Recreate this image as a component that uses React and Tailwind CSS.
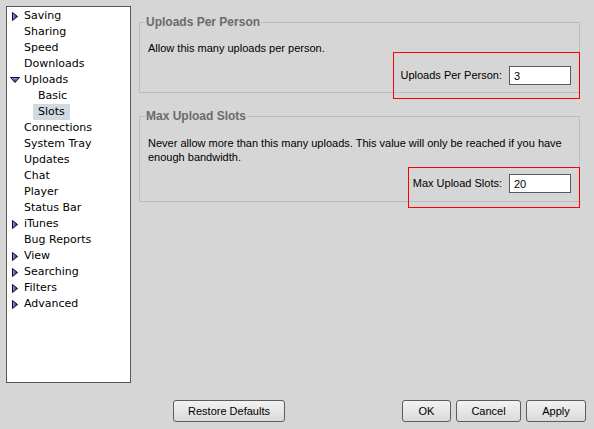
import React from 'react';

const treeItems = [
  { label: 'Saving', arrow: 'right' },
  { label: 'Sharing' },
  { label: 'Speed' },
  { label: 'Downloads' },
  { label: 'Uploads', arrow: 'down' },
  { label: 'Basic', sub: true },
  { label: 'Slots', sub: true, selected: true },
  { label: 'Connections' },
  { label: 'System Tray' },
  { label: 'Updates' },
  { label: 'Chat' },
  { label: 'Player' },
  { label: 'Status Bar' },
  { label: 'iTunes', arrow: 'right' },
  { label: 'Bug Reports' },
  { label: 'View', arrow: 'right' },
  { label: 'Searching', arrow: 'right' },
  { label: 'Filters', arrow: 'right' },
  { label: 'Advanced', arrow: 'right' },
];

const Arrow = ({ dir }) =>
  dir === 'down' ? (
    <svg width="10" height="6" viewBox="0 0 10 6" className="ml-[3px]">
      <defs>
        <linearGradient id="gd" x1="0" y1="0" x2="0" y2="1">
          <stop offset="0" stopColor="#9a9aff" />
          <stop offset="1" stopColor="#1c1c8a" />
        </linearGradient>
      </defs>
      <polygon points="0.5,0.5 9.5,0.5 5,5.5" fill="url(#gd)" stroke="#0c0c14" strokeWidth="1" />
    </svg>
  ) : (
    <svg width="6" height="9" viewBox="0 0 6 9" className="ml-[5px]">
      <defs>
        <linearGradient id="gr" x1="0" y1="0" x2="1" y2="0">
          <stop offset="0" stopColor="#9a9aff" />
          <stop offset="1" stopColor="#1c1c8a" />
        </linearGradient>
      </defs>
      <polygon points="0.5,0.5 5.5,4.5 0.5,8.5" fill="url(#gr)" stroke="#0c0c14" strokeWidth="1" />
    </svg>
  );

const TreeRow = ({ item }) => {
  if (item.sub) {
    return (
      <div className="h-[16px] flex items-center pl-[26px]">
        <span className={`h-[16px] flex items-center px-[5px] ${item.selected ? 'bg-[#d3d9e1]' : ''}`}>
          {item.label}
        </span>
      </div>
    );
  }
  return (
    <div className="h-[16px] flex items-center">
      <div className="w-[17px] flex items-center">{item.arrow && <Arrow dir={item.arrow} />}</div>
      <span>{item.label}</span>
    </div>
  );
};

const Group = ({ title, children, className = '' }) => (
  <fieldset className={`border border-[#bcbcbc] px-[8px] ${className}`}>
    <legend className="-ml-[3px] px-[1px] text-[12px] leading-[14px] font-bold text-[#6b6b6b]">{title}</legend>
    {children}
  </fieldset>
);

const Field = ({ label, value, box }) => (
  <div className="relative flex items-center justify-end gap-[7px]">
    <span>{label}</span>
    <input
      readOnly
      value={value}
      className="w-[62px] h-[19px] bg-white border border-[#555c5c] px-[4px] text-[11px] text-black outline-none"
    />
    <div className={`absolute border border-solid border-[#ff0000] pointer-events-none ${box}`} />
  </div>
);

const Button = ({ children, w }) => (
  <button className={`h-[22px] ${w} rounded-[3px] border border-[#5c5c5c] bg-gradient-to-b from-[#f2f2f2] to-[#dadada] text-[11px] text-black`}>
    {children}
  </button>
);

export default function App() {
  return (
    <div className="w-[594px] h-[429px] bg-[#d6d6d6] flex flex-col font-['Liberation_Sans',Arial,sans-serif] text-[11px] text-black overflow-hidden">
      <div className="flex px-[6px] pt-[6px]">
        {/* Tree */}
        <div className="w-[125px] h-[377px] pt-[1px] bg-white border border-[#535959] font-['DejaVu_Sans',sans-serif] text-[11px] text-black">
          {treeItems.map((it) => (
            <TreeRow key={it.label} item={it} />
          ))}
        </div>

        {/* Options */}
        <div className="ml-[8px] w-[441px] pt-[9px]">
          <Group title="Uploads Per Person">
            <div className="pt-[12px] leading-[14px]">Allow this many uploads per person.</div>
            <div className="mt-[11px] mb-[7px]">
              <Field label="Uploads Per Person:" value="3" box="top-[-14px] bottom-[-14px] right-[-9px] w-[187px]" />
            </div>
          </Group>

          <Group title="Max Upload Slots" className="mt-[16px]">
            <div className="pt-[13px] leading-[14px]">
              Never allow more than this many uploads. This value will only be reached if you have enough bandwidth.
            </div>
            <div className="mt-[10px] mb-[8px]">
              <Field label="Max Upload Slots:" value="20" box="top-[-7px] bottom-[-15px] right-[-9px] w-[172px]" />
            </div>
          </Group>
        </div>
      </div>

      {/* Bottom buttons */}
      <div className="flex items-center mt-[17px] pl-[173px] pr-[8px]">
        <Button w="w-[112px]">Restore Defaults</Button>
        <div className="ml-auto flex gap-[5px]">
          <Button w="w-[49px]">OK</Button>
          <Button w="w-[65px]">Cancel</Button>
          <Button w="w-[60px]">Apply</Button>
        </div>
      </div>
    </div>
  );
}
